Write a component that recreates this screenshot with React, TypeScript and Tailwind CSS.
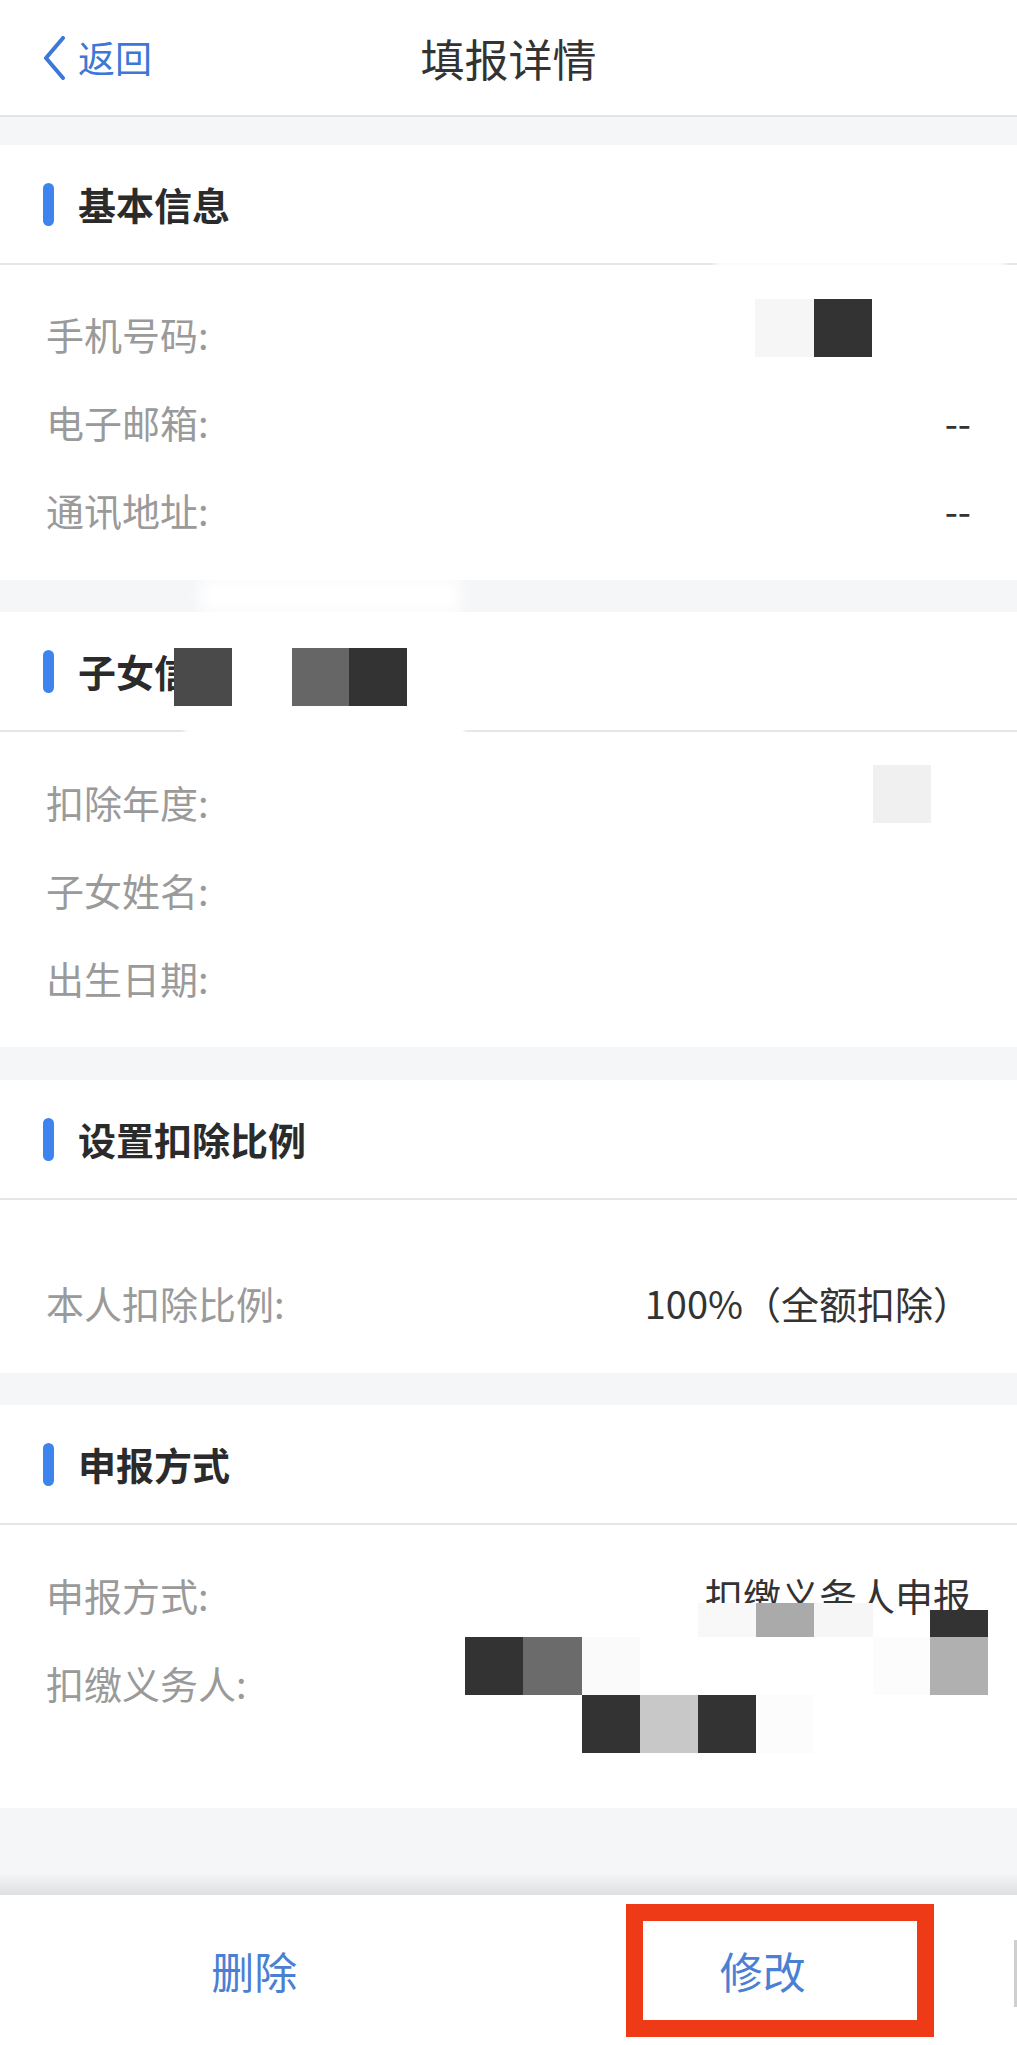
import React from "react";

// redaction blocks laid over the page (page coordinates)
const mosaic: { x: number; y: number; w: number; h: number; c: string }[] = [
  { x: 755, y: 299, w: 59, h: 58, c: "#f6f6f6" },
  { x: 814, y: 299, w: 58, h: 58, c: "#333333" },
  { x: 174, y: 648, w: 58, h: 58, c: "#4a4a4a" },
  { x: 232, y: 648, w: 60, h: 58, c: "#ffffff" },
  { x: 292, y: 648, w: 57, h: 58, c: "#666666" },
  { x: 349, y: 648, w: 58, h: 58, c: "#333333" },
  { x: 873, y: 765, w: 58, h: 58, c: "#f0f0f0" },
  { x: 698, y: 1603, w: 58, h: 34, c: "#f8f8f8" },
  { x: 756, y: 1603, w: 58, h: 34, c: "#aaaaaa" },
  { x: 814, y: 1603, w: 59, h: 34, c: "#f6f6f6" },
  { x: 930, y: 1610, w: 58, h: 27, c: "#333333" },
  { x: 465, y: 1637, w: 58, h: 58, c: "#333333" },
  { x: 523, y: 1637, w: 59, h: 58, c: "#6b6b6b" },
  { x: 582, y: 1637, w: 58, h: 58, c: "#fafafa" },
  { x: 873, y: 1637, w: 57, h: 58, c: "#fcfcfc" },
  { x: 930, y: 1637, w: 58, h: 58, c: "#b0b0b0" },
  { x: 582, y: 1695, w: 58, h: 58, c: "#333333" },
  { x: 640, y: 1695, w: 58, h: 58, c: "#c8c8c8" },
  { x: 698, y: 1695, w: 58, h: 58, c: "#333333" },
  { x: 756, y: 1695, w: 58, h: 58, c: "#fcfcfc" },
];

const SectionTitle = ({ title }: { title: string }) => (
  <div className="flex h-[120px] items-center gap-[24px] border-b-2 border-[#e6e6e6] px-[43px]">
    <span className="h-[43px] w-[11px] rounded-full bg-[#3d84ef]" />
    <span className="text-[38px] font-bold leading-none text-[#2b2b2b]">{title}</span>
  </div>
);

const Row = ({ label, value, tall }: { label: string; value?: string; tall?: boolean }) => (
  <div className={`flex items-start justify-between ${tall ? "h-[146px]" : "h-[88px]"}`}>
    <span className="flex h-[88px] items-center text-[38px] leading-none text-[#9a9a9a]">{label}</span>
    <span className="flex h-[88px] items-center text-[38px] leading-none text-[#333]">{value}</span>
  </div>
);

const App = () => {
  return (
    <div className="relative h-[2045px] w-[1017px] overflow-hidden bg-[#f5f6f8] font-['Noto_Sans_CJK_SC','Noto_Sans',sans-serif]">
      {/* top bar */}
      <div className="grid h-[117px] grid-cols-3 items-center border-b-2 border-[#e4e4e4] bg-white">
        <div className="flex items-center gap-[12px] pl-[43px]">
          <svg width="23" height="44" viewBox="0 0 23 44" fill="none">
            <polyline points="20,2 3,22 20,42" stroke="#3b78d8" strokeWidth="4" strokeLinecap="round" strokeLinejoin="round" />
          </svg>
          <span className="text-[37px] leading-none text-[#3b78d8]">返回</span>
        </div>
        <div className="text-center text-[44px] leading-none text-[#333]">填报详情</div>
        <div />
      </div>

      <div className="h-[28px]" />

      {/* 基本信息 */}
      <div className="bg-white">
        <SectionTitle title="基本信息" />
        <div className="px-[46px] pb-[26px] pt-[25px]">
          <Row label="手机号码:" value="" />
          <Row label="电子邮箱:" value="--" />
          <Row label="通讯地址:" value="--" />
        </div>
      </div>

      <div className="h-[32px]" />

      {/* 子女信息 */}
      <div className="bg-white">
        <SectionTitle title="子女信息" />
        <div className="px-[46px] pb-[25px] pt-[26px]">
          <Row label="扣除年度:" value="" />
          <Row label="子女姓名:" value="" />
          <Row label="出生日期:" value="" />
        </div>
      </div>

      <div className="h-[33px]" />

      {/* 设置扣除比例 */}
      <div className="bg-white">
        <SectionTitle title="设置扣除比例" />
        <div className="px-[46px] pb-[26px] pt-[59px]">
          <Row label="本人扣除比例:" value="100%（全额扣除）" />
        </div>
      </div>

      <div className="h-[32px]" />

      {/* 申报方式 */}
      <div className="bg-white">
        <SectionTitle title="申报方式" />
        <div className="px-[46px] pb-[23px] pt-[26px]">
          <Row label="申报方式:" value="扣缴义务人申报" />
          <Row label="扣缴义务人:" value="" tall />
        </div>
      </div>

      <div className="h-[87px] bg-linear-to-b from-[#f5f6f8] from-75% to-[#dedfe1]" />

      {/* bottom actions */}
      <div className="relative grid h-[150px] grid-cols-2 bg-white">
        <button className="text-[43px] leading-none text-[#4a80d3]">删除</button>
        <button className="text-[43px] leading-none text-[#4a80d3]">修改</button>
        <div className="absolute left-[626px] top-[9px] h-[133px] w-[308px] border-[17px] border-[#ee3a16]" />
        <div className="absolute right-0 top-[45px] h-[67px] w-[3px] bg-[#cfcfcf]" />
      </div>

      {/* blurred patches left by the redaction */}
      <div className="absolute left-[200px] top-[578px] h-[36px] w-[260px] bg-white blur-sm" />
      <div className="absolute left-[185px] top-[726px] h-[12px] w-[280px] bg-white blur-[2px]" />
      <div className="absolute left-[715px] top-[260px] h-[10px] w-[290px] bg-white blur-[3px]" />

      {mosaic.map((m, i) => (
        <div
          key={i}
          className="absolute"
          style={{ left: m.x, top: m.y, width: m.w, height: m.h, background: m.c }}
        />
      ))}
    </div>
  );
};

export default App;
